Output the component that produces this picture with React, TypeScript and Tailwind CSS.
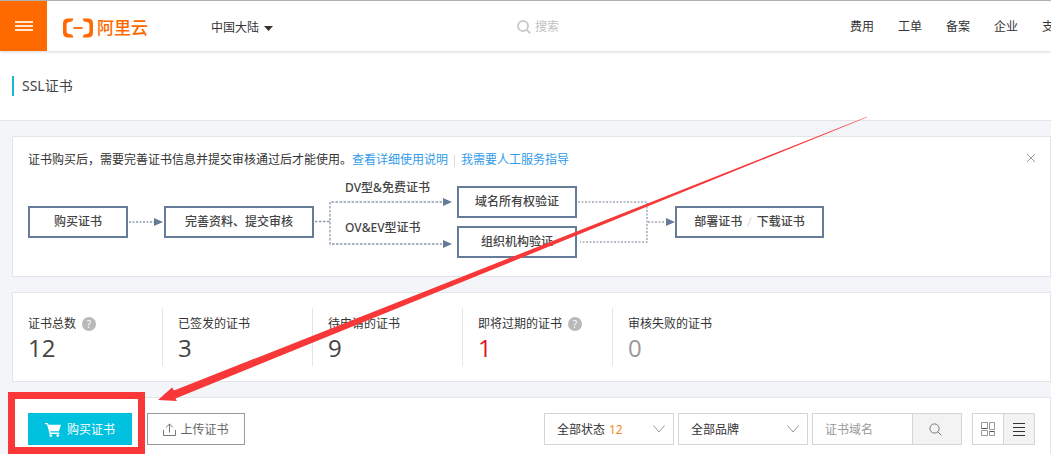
import React from 'react';
import clsx from 'clsx';

interface StatItem {
  label: string;
  value: number;
  help?: boolean;
  color: string;
}

const NAV_ITEMS = ['费用', '工单', '备案', '企业', '支'];

const STATS: StatItem[] = [
  { label: '证书总数', value: 12, help: true, color: 'text-[#444]' },
  { label: '已签发的证书', value: 3, color: 'text-[#444]' },
  { label: '待申请的证书', value: 9, color: 'text-[#444]' },
  { label: '即将过期的证书', value: 1, help: true, color: 'text-[#d9141e]' },
  { label: '审核失败的证书', value: 0, color: 'text-[#999]' },
];

const Logo: React.FC = () => (
  <a href="#" aria-label="阿里云" className="ml-4 flex items-center gap-1 pt-1 text-[#ff6a00]">
    <svg width="30" height="20" viewBox="0 0 30 20" fill="currentColor">
      <path d="M10.5 0.5H5Q0 0.5 0 5.5V14.5Q0 19.5 5 19.5H10.5L9.3 16.8L5.2 15.8Q3.6 15.4 3.6 13.8V6.2Q3.6 4.6 5.2 4.2L9.3 3.2Z" />
      <path d="M19.5 0.5H25Q30 0.5 30 5.5V14.5Q30 19.5 25 19.5H19.5L20.7 16.8L24.8 15.8Q26.4 15.4 26.4 13.8V6.2Q26.4 4.6 24.8 4.2L20.7 3.2Z" />
      <path d="M10.3 9.1H19.7V10.9H10.3Z" />
    </svg>
    <span className="text-[17px] leading-5 font-medium">阿里云</span>
  </a>
);

const Header: React.FC = () => (
  <header className="relative z-10 flex h-[51px] items-center border-t border-[#b0b0b0] bg-white shadow-[0_1px_3px_rgba(0,0,0,0.16)]">
    <button aria-label="菜单" className="flex h-[50px] w-[47px] shrink-0 items-center justify-center bg-[#ff6a00]">
      <svg width="18" height="10" viewBox="0 0 18 10" stroke="#ffe9cf" strokeWidth="2">
        <path d="M0 1H18M0 5H18M0 9H18" />
      </svg>
    </button>
    <Logo />
    <button className="ml-[63px] flex shrink-0 items-center gap-[5px] pt-1 text-xs text-[#333]">
      中国大陆
      <svg width="9" height="5" viewBox="0 0 9 5" fill="#333">
        <path d="M0 0H9L4.5 5Z" />
      </svg>
    </button>
    <label className="ml-auto flex items-center gap-1 pt-0.5 text-[#bfbfbf]">
      <svg width="14" height="14" viewBox="0 0 14 14" fill="none" stroke="#ccc" strokeWidth="2">
        <circle cx="6" cy="6" r="5" />
        <path d="M9.6 9.6L13.2 13.2" />
      </svg>
      <input
        type="text"
        aria-label="搜索"
        placeholder="搜索"
        className="w-[100px] text-xs outline-none placeholder:text-[#bfbfbf]"
      />
    </label>
    <nav className="ml-[215px] flex w-[201px] shrink-0 gap-6 overflow-hidden pt-0.5 text-xs text-[#333]">
      {NAV_ITEMS.map((item) => (
        <a key={item} href="#" className="shrink-0 whitespace-nowrap">
          {item}
        </a>
      ))}
    </nav>
  </header>
);

const StepBox: React.FC<{ className: string; children: React.ReactNode }> = ({ className, children }) => (
  <div
    className={clsx(
      'flex h-8 shrink-0 items-center justify-center border-2 border-[#667b98] bg-white text-xs font-medium text-[#444]',
      className
    )}
  >
    {children}
  </div>
);

const ProcessFlow: React.FC = () => (
  <div className="mt-[10px] flex h-[84px] items-center">
    <StepBox className="w-[100px]">购买证书</StepBox>
    <svg width="36" height="10" viewBox="0 0 36 10" className="shrink-0">
      <path d="M1 5H26" stroke="#8c9bb0" strokeWidth="1.5" strokeDasharray="2 1.5" />
      <path d="M26 1L35 5L26 9Z" fill="#667b98" />
    </svg>
    <StepBox className="w-[150px]">完善资料、提交审核</StepBox>
    <div className="relative h-[84px] w-[143px] shrink-0 pl-[31px] text-xs leading-4 font-medium text-[#444]">
      <svg width="143" height="84" viewBox="0 0 143 84" className="absolute inset-0" fill="none">
        <path d="M1 41.5H16M128 22H16V64H128" stroke="#8c9bb0" strokeWidth="1.3" strokeDasharray="2.5 1.5" />
        <path d="M129 18L138 22L129 26ZM129 60L138 64L129 68Z" fill="#667b98" />
      </svg>
      <p className="mb-6">DV型&amp;免费证书</p>
      <p>OV&amp;EV型证书</p>
    </div>
    <div className="flex shrink-0 flex-col gap-2">
      <StepBox className="w-[120px]">域名所有权验证</StepBox>
      <StepBox className="w-[120px]">组织机构验证</StepBox>
    </div>
    <svg width="98" height="84" viewBox="0 0 98 84" fill="none" className="shrink-0">
      <path d="M1 22H70V62H3M71 42H88" stroke="#a3abb7" strokeWidth="1.5" strokeDasharray="2 1.5" />
      <path d="M89 38L98 42L89 46Z" fill="#667b98" />
    </svg>
    <StepBox className="w-[149px] gap-[5px]">
      部署证书
      <span className="font-normal text-[#ddd]">/</span>
      下载证书
    </StepBox>
  </div>
);

const NoticePanel: React.FC = () => (
  <section className="relative border border-[#e3e5e9] bg-white px-[15px] pt-[13px] pb-3">
    <p className="text-xs leading-5">
      证书购买后，需要完善证书信息并提交审核通过后才能使用。
      <a href="#" className="text-[#2f9bea]">查看详细使用说明</a>
      <span className="mx-[6px] inline-block h-3 w-px bg-[#ddd] align-middle" />
      <a href="#" className="text-[#2f9bea]">我需要人工服务指导</a>
    </p>
    <ProcessFlow />
    <button aria-label="关闭" className="absolute top-4 right-[14px]">
      <svg width="10" height="10" viewBox="0 0 10 10" stroke="#999" strokeWidth="1">
        <path d="M1 1L9 9M9 1L1 9" />
      </svg>
    </button>
  </section>
);

const StatsPanel: React.FC = () => (
  <section className="flex border border-[#e3e5e9] bg-white py-[15px]">
    {STATS.map((stat) => (
      <div key={stat.label} className="h-[58px] w-[150px] border-r border-[#e3e5e9] pl-[15px] last:border-r-0">
        <div className="flex h-8 items-center text-xs">
          {stat.label}
          {stat.help && (
            <span className="ml-[6px] flex size-[14px] items-center justify-center rounded-full bg-[#b9b9b9] text-[10px] leading-none text-white">
              ?
            </span>
          )}
        </div>
        <div className={clsx("font-['Open_Sans',sans-serif] text-2xl leading-4", stat.color)}>{stat.value}</div>
      </div>
    ))}
  </section>
);

const FilterSelect: React.FC<{ label: string; count?: number }> = ({ label, count }) => (
  <div className="relative h-8 w-[130px]">
    <select
      aria-label={label}
      className="size-full appearance-none border border-[#d5d5d5] bg-white pt-0.5 pl-3 text-xs outline-none"
    >
      <option>{label}</option>
    </select>
    {count !== undefined && (
      <span className="pointer-events-none absolute top-0 left-[65px] pt-px text-xs leading-8 text-[#f28a24]">{count}</span>
    )}
    <svg
      width="12"
      height="8"
      viewBox="0 0 12 8"
      fill="none"
      stroke="#999"
      className="pointer-events-none absolute top-3 right-[9px]"
    >
      <path d="M0.5 0.5L6 7L11.5 0.5" />
    </svg>
  </div>
);

const Toolbar: React.FC = () => (
  <section className="flex flex-1 items-start border border-b-0 border-[#e3e5e9] bg-white px-[15px] pt-[15px]">
    <div className="relative">
      <button className="flex h-8 w-[104px] items-center justify-center gap-[6px] bg-[#00c1de] pt-0.5 text-xs text-white">
        <svg width="16" height="14" viewBox="0 0 16 14" fill="#fff">
          <path d="M0 0H3L3.6 1.8H16L14 8.2H5.2L5.6 9.6H14.2V11H4.6L2 1.3H0Z" />
          <circle cx="5.8" cy="12.6" r="1.4" />
          <circle cx="12.8" cy="12.6" r="1.4" />
        </svg>
        购买证书
      </button>
      <div className="pointer-events-none absolute -top-[21px] -right-[13px] -bottom-[9px] -left-5 border-[7px] border-[#fb3737]" />
    </div>
    <button className="ml-[15px] flex h-8 w-[98px] items-center justify-center gap-1 border border-[#999] pt-0.5 text-xs text-[#666]">
      <svg width="13" height="13" viewBox="0 0 13 13" fill="none" stroke="#777" className="mb-0.5">
        <path d="M0.5 7V12.5H12.5V7M6.5 9.5V1M3.2 4.3L6.5 1L9.8 4.3" />
      </svg>
      上传证书
    </button>
    <div className="ml-auto flex gap-1">
      <FilterSelect label="全部状态" count={12} />
      <FilterSelect label="全部品牌" />
      <div className="flex h-8">
        <input
          type="text"
          aria-label="证书域名"
          placeholder="证书域名"
          className="w-[101px] border border-[#d5d5d5] pt-0.5 pl-3 text-xs outline-none placeholder:text-[#999]"
        />
        <button
          aria-label="查询"
          className="-ml-px flex w-[50px] items-center justify-center border border-[#d5d5d5] bg-[#f3f3f3] pr-1"
        >
          <svg width="13" height="13" viewBox="0 0 13 13" fill="none" stroke="#777">
            <circle cx="5.5" cy="5.5" r="4.6" />
            <path d="M8.8 8.8L12.3 12.3" />
          </svg>
        </button>
      </div>
      <div className="ml-[6px] flex h-8 w-[63px] border border-[#d5d5d5]">
        <button aria-label="卡片视图" className="flex flex-1 items-center justify-center">
          <svg width="14" height="14" viewBox="0 0 14 14" fill="none" stroke="#999">
            <path d="M0.5 0.5H6.5V6.5H0.5ZM8.5 0.5H13.5V7.5H8.5ZM0.5 8.5H6.5V13.5H0.5ZM8.5 9.5H13.5V13.5H8.5Z" />
            <path d="M0.5 6.5H6.5M8.5 9.5H13.5" stroke="#555" />
          </svg>
        </button>
        <button
          aria-label="列表视图"
          className="flex flex-1 items-center justify-center border-l border-[#d5d5d5] bg-[#f3f3f3]"
        >
          <svg width="12" height="13" viewBox="0 0 12 13" stroke="#333">
            <path d="M0 0.5H12M0 4.5H12M0 8.5H12M0 12.5H12" />
          </svg>
        </button>
      </div>
    </div>
  </section>
);

// Hand-drawn pointer that leads the eye to the buy button
const PointerArrow: React.FC = () => (
  <svg
    width="1051"
    height="454"
    viewBox="0 0 1051 454"
    className="pointer-events-none absolute top-0 left-0 z-20"
    fill="#f83838"
  >
    <path d="M867 116.8L174 390.5L172 387.5L158 400L177 401L175.5 398.5L867 117.2Z" />
  </svg>
);

const App: React.FC = () => (
  <div className="relative flex min-h-screen flex-col overflow-hidden bg-[#f4f5f9] font-['Noto_Sans','Noto_Sans_CJK_SC',sans-serif] text-[#333]">
    <Header />
    <div className="flex h-[70px] items-center border-b border-[#e3e5e9] bg-white pl-3">
      <h1 className="border-l-2 border-[#19b9d0] pl-2 text-sm leading-5 text-[#444]">SSL证书</h1>
    </div>
    <main className="flex flex-1 flex-col gap-[15px] pt-[15px] pl-3">
      <NoticePanel />
      <StatsPanel />
      <Toolbar />
    </main>
    <PointerArrow />
  </div>
);

export default App;
